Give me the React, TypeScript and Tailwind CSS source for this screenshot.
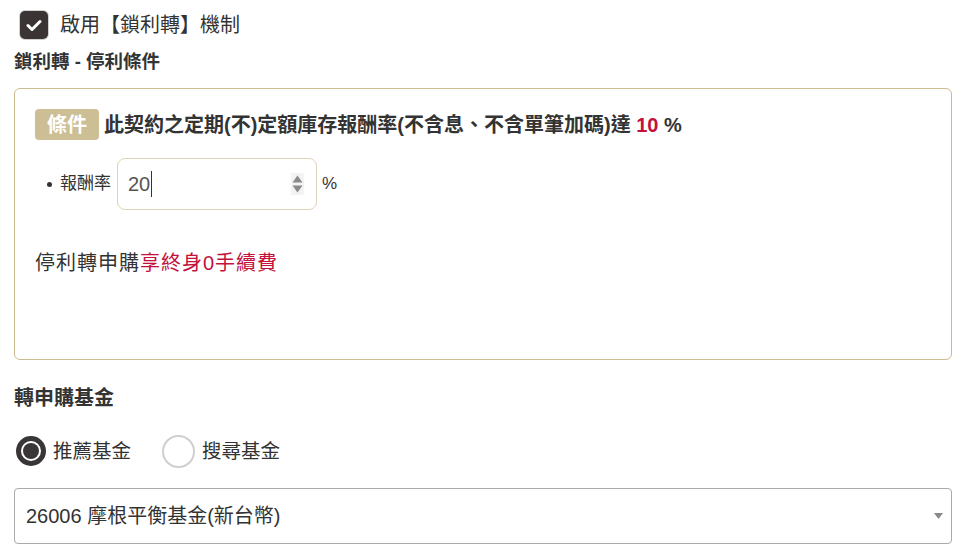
import React from "react";

export default function App() {
  return (
    <div
      className="w-[967px] h-[557px] overflow-hidden bg-white pl-[14px] pr-[15px] pt-[11px] text-[#333]"
      style={{ fontFamily: '"Liberation Sans", "Noto Sans CJK TC", sans-serif' }}
    >
      {/* enable checkbox */}
      <div className="flex items-center ml-[6px] h-[28px] gap-[12px]">
        <div className="w-[28px] h-[28px] rounded-[5px] bg-[#3a3435] ring-1 ring-[#d0d0d0] flex items-center justify-center">
          <svg width="16" height="13" viewBox="0 0 16 13">
            <path d="M2 6.5 L6 10.5 L14 2.5" fill="none" stroke="#fff" strokeWidth="3" strokeLinecap="round" strokeLinejoin="round" />
          </svg>
        </div>
        <span className="text-[20px] leading-[28px]">啟用【鎖利轉】機制</span>
      </div>

      <div className="mt-[11px] text-[18.5px] leading-[24px] font-bold">鎖利轉 - 停利條件</div>

      {/* condition box */}
      <div className="mt-[14px] h-[272px] border border-[#cbbd8f] rounded-[6px] pt-[20px] pl-[20px] pr-[20px]">
        <div className="flex items-center gap-[5px]">
          <span className="h-[31px] w-[64px] flex items-center justify-center rounded-[4px] bg-[#cdbf95] text-white font-bold text-[20px]">
            條件
          </span>
          <span className="font-bold text-[20px] leading-[28px] text-[#333]">
            此契約之定期(不)定額庫存報酬率(不含息、不含單筆加碼)達 <span className="text-[#c3113b]">10</span> %
          </span>
        </div>

        <div className="mt-[18px] flex items-center">
          <span className="ml-[12px] w-[13px] flex items-center">
            <span className="w-[5px] h-[5px] rounded-full bg-[#333]" />
          </span>
          <span className="text-[17px] leading-[24px]">報酬率</span>
          <div className="ml-[6px] w-[200px] h-[52px] border border-[#ddd4b5] rounded-[8px] flex items-center pl-[10px] pr-[12px]">
            <span className="text-[20px] text-[#555] leading-[28px]">20</span>
            <span className="w-px h-[26px] bg-[#333] ml-[1px]" />
            <div className="ml-auto flex flex-col items-center gap-[2px] bg-[#f3f3f3] px-[1px] py-[2px]">
              <svg width="11" height="8" viewBox="0 0 11 8"><path d="M5.5 0.5 L10.5 7.5 L0.5 7.5 Z" fill="#8a8a8a" /></svg>
              <svg width="11" height="8" viewBox="0 0 11 8"><path d="M0.5 0.5 L10.5 0.5 L5.5 7.5 Z" fill="#8a8a8a" /></svg>
            </div>
          </div>
          <span className="ml-[5px] text-[17px]">%</span>
        </div>

        <div className="mt-[39px] text-[20px] leading-[28px] tracking-[1px]">
          停利轉申購<span className="text-[#c3113b]">享終身0手續費</span>
        </div>
      </div>

      <div className="mt-[24px] text-[20px] leading-[28px] font-bold">轉申購基金</div>

      {/* radios */}
      <div className="mt-[23px] flex items-center h-[32px]">
        <div className="ml-[2px] w-[30px] h-[30px] rounded-full border-[5px] border-[#3a3536] flex items-center justify-center">
          <div className="w-[16px] h-[16px] rounded-full bg-[#3a3536]" />
        </div>
        <span className="ml-[7px] text-[19.5px] leading-[28px]">推薦基金</span>
        <div className="ml-[31px] w-[33px] h-[33px] rounded-full border-2 border-[#cfcfcf]" />
        <span className="ml-[7px] text-[19.5px] leading-[28px]">搜尋基金</span>
      </div>

      {/* select */}
      <div className="mt-[21px] h-[56px] border border-[#aaa] rounded-[4px] flex items-center pl-[11px] pr-[8px]">
        <span className="text-[20px] leading-[28px] text-[#333]">26006 摩根平衡基金(新台幣)</span>
        <svg className="ml-auto" width="9" height="6" viewBox="0 0 9 6"><path d="M0 0 L9 0 L4.5 6 Z" fill="#888" /></svg>
      </div>
    </div>
  );
}
